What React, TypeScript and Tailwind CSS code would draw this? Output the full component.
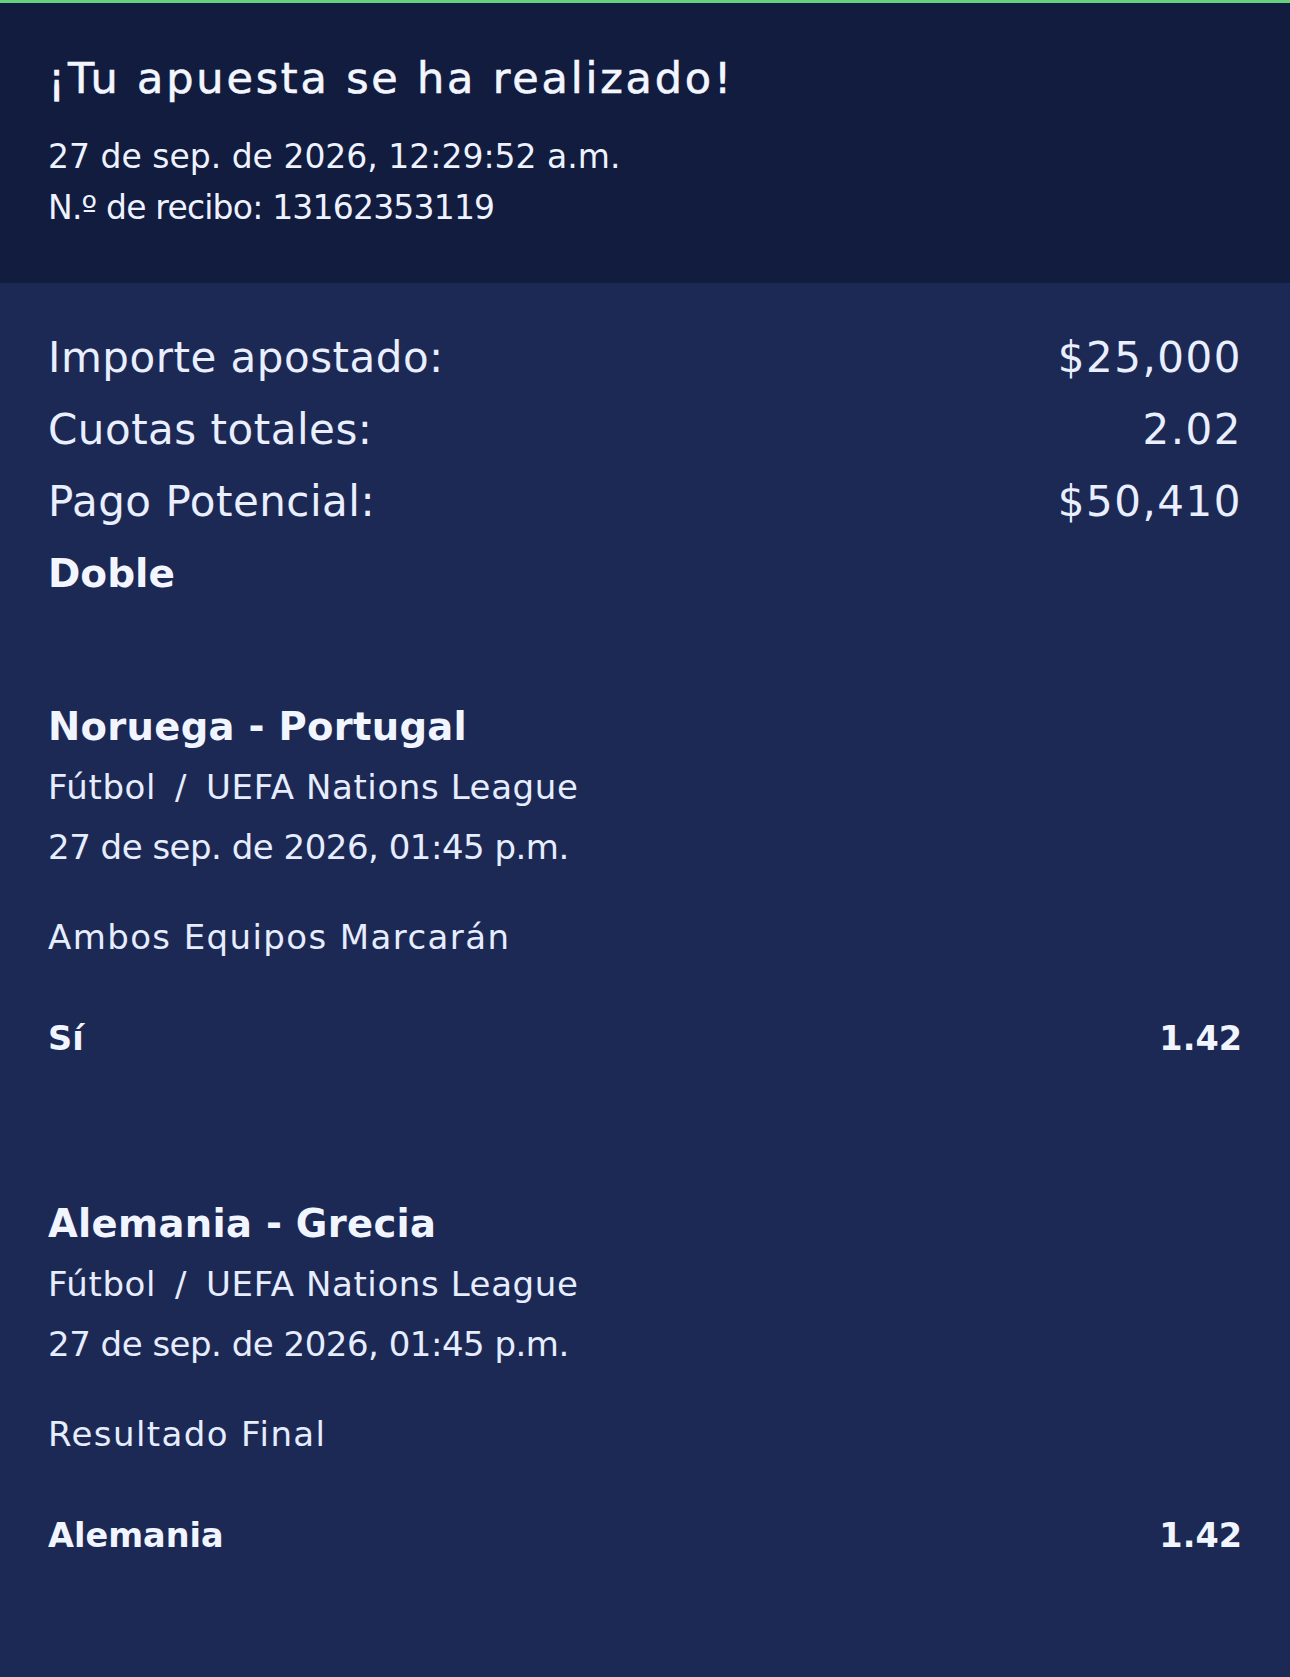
import React from "react";

const font = { fontFamily: "'DejaVu Sans', Inter, sans-serif" };

function Event({ title, date, market, pick, odds }: { title: string; date: string; market: string; pick: string; odds: string }) {
  return (
    <div className="flex flex-col">
      <div className="text-[38.5px] leading-[60px] font-semibold tracking-[0.3px] text-[#f1f5ff]">{title}</div>
      <div className="text-[34px] leading-[60px] tracking-[0.6px] text-[#e6edff] flex items-center">
        <span>Fútbol</span>
        <span className="mx-[19px]">/</span>
        <span>UEFA Nations League</span>
      </div>
      <div className="text-[34px] leading-[60px] tracking-[-0.5px] text-[#e6edff]">{date}</div>
      <div className="mt-[30px] text-[34px] leading-[60px] tracking-[1.4px] text-[#e6edff]">{market}</div>
      <div className="mt-[42px] flex items-center justify-between text-[33.5px] leading-[60px] font-bold text-[#f1f5ff]">
        <span>{pick}</span>
        <span>{odds}</span>
      </div>
    </div>
  );
}

function Row({ label, value }: { label: string; value: string }) {
  return (
    <div className="flex justify-between text-[42px] leading-[72px] text-[#e9efff]">
      <span className="tracking-[0.5px]">{label}</span>
      <span className="tracking-[1.5px]">{value}</span>
    </div>
  );
}

export default function App() {
  return (
    <div style={font} className="w-[1290px] min-h-[1677px] bg-[#1d2955] flex flex-col">
      <div className="bg-[#111c3f] border-t-[3px] border-[#67d17f] h-[283px] px-[48px] pt-[47px] flex flex-col">
        <div className="text-[43px] leading-[56px] tracking-[2.8px] [-webkit-text-stroke:0.6px_#f3f6ff] text-[#f3f6ff]">¡Tu apuesta se ha realizado!</div>
        <div className="mt-[25px] text-[33px] leading-[52px] text-[#eef2ff]">27 de sep. de 2026, 12:29:52 a.m.</div>
        <div className="text-[33px] leading-[50px] tracking-[-0.8px] text-[#eef2ff]">N.º de recibo: 13162353119</div>
      </div>
      <div className="px-[48px] pt-[39px] pb-[110px] flex flex-col">
        <Row label="Importe apostado:" value="$25,000" />
        <Row label="Cuotas totales:" value="2.02" />
        <Row label="Pago Potencial:" value="$50,410" />
        <div className="text-[39px] leading-[72px] font-bold text-[#f3f6ff]">Doble</div>
        <div className="mt-[87px]">
          <Event title="Noruega - Portugal" date="27 de sep. de 2026, 01:45 p.m." market="Ambos Equipos Marcarán" pick="Sí" odds="1.42" />
        </div>
        <div className="mt-[125px]">
          <Event title="Alemania - Grecia" date="27 de sep. de 2026, 01:45 p.m." market="Resultado Final" pick="Alemania" odds="1.42" />
        </div>
      </div>
    </div>
  );
}
